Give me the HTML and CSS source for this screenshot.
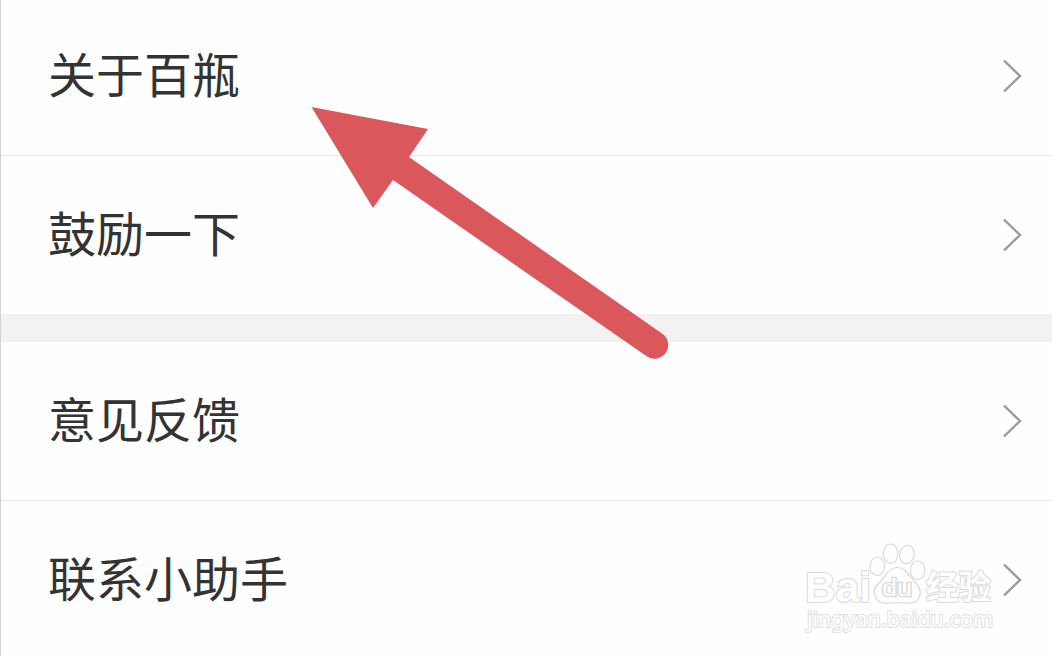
FILE: index.html
```html
<!DOCTYPE html>
<html lang="zh-CN">
<head>
    <meta charset="UTF-8">
    <title>设置</title>
    <link rel="stylesheet" href="styles.css">
</head>
<body>

<div class="page">
    <div class="menu-group">
        <div class="menu-item menu-item-first">
            <span class="menu-label">关于百瓶</span>
            <svg class="menu-arrow" viewBox="0 0 20 34"><path d="M2 1.500L18 17L2 32.500"/></svg>
        </div>
        <div class="menu-item">
            <span class="menu-label">鼓励一下</span>
            <svg class="menu-arrow" viewBox="0 0 20 34"><path d="M2 1.500L18 17L2 32.500"/></svg>
        </div>
    </div>
    <div class="menu-group">
        <div class="menu-item">
            <span class="menu-label">意见反馈</span>
            <svg class="menu-arrow" viewBox="0 0 20 34"><path d="M2 1.500L18 17L2 32.500"/></svg>
        </div>
        <div class="menu-item">
            <span class="menu-label">联系小助手</span>
            <svg class="menu-arrow" viewBox="0 0 20 34"><path d="M2 1.500L18 17L2 32.500"/></svg>
        </div>
    </div>

    <svg class="pointer" viewBox="0 0 358 254">
        <path d="M0.500 1L117 23L98 51L351 227.500A13.500 13.500 0 0 1 336 250.500L82 74L62 102Z"/>
    </svg>

    <svg class="watermark" viewBox="0 0 200 96">
        <text class="logo-latin" x="5" y="61.500" textLength="66" lengthAdjust="spacingAndGlyphs">Bai</text>
        <ellipse cx="77.300" cy="26.300" rx="7.300" ry="9.300"/>
        <ellipse cx="90.700" cy="13.700" rx="7.300" ry="9.700"/>
        <ellipse cx="107" cy="14.500" rx="7.300" ry="9.300" transform="rotate(10 107 14.500)"/>
        <ellipse cx="117.700" cy="30.300" rx="7.300" ry="9.300"/>
        <path d="M97 27.500C88 28 86 36 80 42C74 47 73 53 76 58C81 66 89 62.500 97 62.500C106 62.500 115 66 119 58C122 52 119 46 115 42C109 36 107 28 97 27.500Z"/>
        <text class="logo-du" x="82" y="55.500" textLength="30" lengthAdjust="spacingAndGlyphs">du</text>
        <text class="logo-cjk" x="126" y="58.500" textLength="65" lengthAdjust="spacingAndGlyphs">经验</text>
        <text class="logo-url" x="7" y="86.500" textLength="186" lengthAdjust="spacingAndGlyphs">jingyan.baidu.com</text>
    </svg>
</div>

</body>
</html>
```
FILE: styles.css
```css
body {
    margin: 0;
    background: #fefefe;
    font-family: "Noto Sans CJK SC", sans-serif;
}

.page {
    position: relative;
    box-sizing: border-box;
    height: 656px;
    overflow: hidden;
    border-left: 1px solid #d2d2d2;
}

.menu-group + .menu-group {
    border-top: 28px solid #f2f2f2;
}

.menu-item {
    display: flex;
    align-items: center;
    justify-content: space-between;
    box-sizing: border-box;
    height: 158px;
    padding: 0 30px 0 47px;
}

.menu-item-first {
    height: 155px;
    padding-bottom: 3px;
}

.menu-item + .menu-item {
    height: 159px;
    border-top: 1px solid #e9e9e9;
}

.menu-label {
    display: block;
    padding-bottom: 9px;
    color: #333;
    font-size: 48px;
    line-height: 72px;
}

.menu-arrow {
    width: 20px;
    height: 34px;
    fill: none;
    stroke: #999;
    stroke-width: 2.4;
}

/* red pointer over the list */
.pointer {
    position: absolute;
    left: 310px;
    top: 106px;
    width: 358px;
    height: 254px;
    fill: #da585c;
}

.watermark {
    position: absolute;
    left: 799px;
    top: 540px;
    width: 200px;
    height: 96px;
    fill: #fefefe;
    stroke: #dadada;
    stroke-width: 1.2;
}

.watermark text {
    paint-order: stroke;
    stroke-width: 2;
    font-weight: bold;
}

.logo-latin {
    font-family: "Liberation Sans", sans-serif;
    font-size: 43px;
}

.watermark .logo-du {
    font-family: "Liberation Sans", sans-serif;
    font-size: 23px;
    font-weight: normal;
    stroke-width: 2.6;
}

.logo-cjk {
    font-size: 33px;
}

.watermark .logo-url {
    font-family: "Noto Sans", sans-serif;
    font-size: 21px;
    font-weight: normal;
    stroke: #e0e0e0;
}
```
